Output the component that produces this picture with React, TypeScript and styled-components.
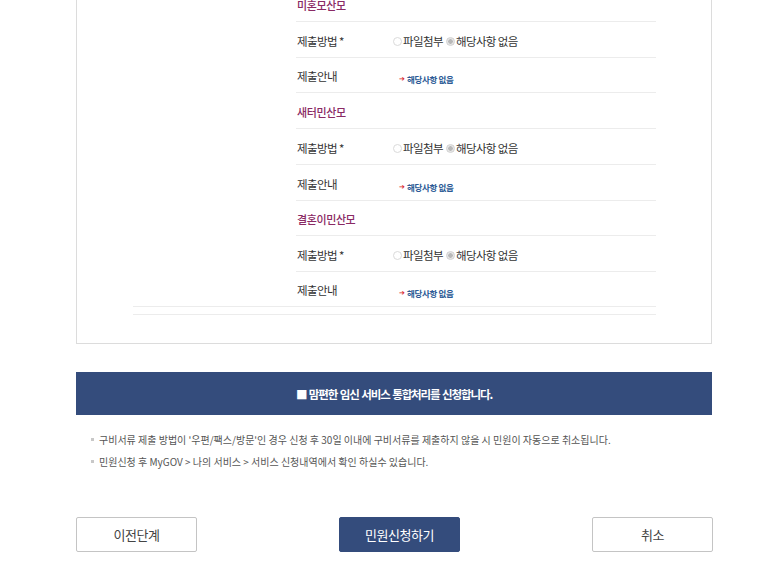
import React from "react";
import styled, { createGlobalStyle } from "styled-components";

const Global = createGlobalStyle`
  html, body { margin: 0; padding: 0; background: #fff; }
  body { font-family: "Noto Sans CJK KR", "Noto Sans", sans-serif; color: #333; overflow: hidden; }
`;

const Page = styled.div`
  width: 773px;
  height: 579px;
  overflow: hidden;
  display: flex;
  flex-direction: column;
  align-items: flex-start;
  padding-left: 76px;
  box-sizing: border-box;
`;

const Box = styled.div`
  margin-top: -40px;
  width: 636px;
  box-sizing: border-box;
  border: 1px solid #dcdcdc;
  padding: 25px 55px 28px 56px;
`;

const Table = styled.div`
  display: grid;
  grid-template-columns: 163px 360px;
  border-bottom: 1px solid #ececec;
`;

const SideCell = styled.div``;

const RightCol = styled.div`
  display: flex;
  flex-direction: column;
`;

const Row = styled.div<{ $h: number; $last?: boolean }>`
  height: ${(p) => p.$h}px;
  box-sizing: border-box;
  border-bottom: ${(p) => (p.$last ? "none" : "1px solid #ececec")};
  display: flex;
  align-items: center;
  padding-left: 1px;
  padding-top: 2px;
`;

const SectionTitle = styled.span`
  font-size: 11px;
  letter-spacing: -0.4px;
  color: #8a2a64;
  font-weight: 500;
`;

const Label = styled.span`
  width: 96px;
  flex: none;
  font-size: 11.5px;
  letter-spacing: -0.6px;
  color: #333;
`;

const Radios = styled.div`
  display: flex;
  align-items: center;
  font-size: 11.5px;
  letter-spacing: -0.6px;
  color: #333;
`;

const RadioDot = styled.span<{ $checked?: boolean }>`
  width: 9px;
  height: 9px;
  border-radius: 50%;
  box-sizing: border-box;
  border: 1px solid ${(p) => (p.$checked ? "#d2d2d2" : "#dadada")};
  background: ${(p) => (p.$checked ? "radial-gradient(circle, #b9b9b9 0 2px, #e6e6e6 2.5px)" : "#fff")};
  margin: 1px 1px 0 ${(p) => (p.$checked ? "3px" : "0")};
  flex: none;
`;

const Guide = styled.div`
  display: flex;
  align-items: center;
  padding-left: 6px;
  padding-top: 6px;
  gap: 2px;
`;

const GuideArrow = styled.span`
  color: #d8262a;
  font-size: 7px;
  font-family: "DejaVu Sans", sans-serif;
`;

const GuideText = styled.span`
  font-size: 8.5px;
  font-weight: 700;
  color: #2b5a95;
  letter-spacing: -0.3px;
`;

const Tail = styled.div`
  height: 7px;
  border-bottom: 1px solid #ececec;
`;

const Banner = styled.div`
  margin-top: 28px;
  width: 636px;
  height: 43px;
  background: #344c7c;
  color: #fff;
  display: flex;
  align-items: center;
  justify-content: center;
  font-size: 11.5px;
  font-weight: 700;
  letter-spacing: -1.1px;
  word-spacing: 1px;
  box-sizing: border-box;
`;

const Notes = styled.ul`
  list-style: none;
  margin: 13px 0 0 0;
  padding: 0 0 0 15px;
`;

const Note = styled.li`
  height: 22px;
  display: flex;
  align-items: center;
  font-size: 10px;
  letter-spacing: 0;
  color: #555;
  &::before {
    content: "";
    width: 3px;
    height: 3px;
    background: #c8c8c8;
    margin-right: 5px;
    flex: none;
  }
`;

const Buttons = styled.div`
  margin-top: 45px;
  width: 637px;
  display: flex;
  justify-content: space-between;
`;

const Btn = styled.button<{ $primary?: boolean; $shift?: number }>`
  width: 121px;
  height: 35px;
  box-sizing: border-box;
  border-radius: 2px;
  border: 1px solid ${(p) => (p.$primary ? "#344c7c" : "#c4c4c4")};
  background: ${(p) => (p.$primary ? "#344c7c" : "#fff")};
  color: ${(p) => (p.$primary ? "#fff" : "#444")};
  font-family: "Noto Sans CJK KR", sans-serif;
  font-size: 13px;
  letter-spacing: -0.5px;
  margin-left: ${(p) => p.$shift ?? 0}px;
  padding: 0;
  cursor: pointer;
`;

const sections = ["미혼모산모", "새터민산모", "결혼이민산모"];
const heights = [
  [36, 36, 35],
  [36, 36, 36],
  [35, 36, 34],
];

export default function App() {
  return (
    <>
      <Global />
      <Page>
        <Box>
          <Table>
            <SideCell />
            <RightCol>
              {sections.map((s, i) => (
                <React.Fragment key={s}>
                  <Row $h={heights[i][0]}>
                    <SectionTitle>{s}</SectionTitle>
                  </Row>
                  <Row $h={heights[i][1]}>
                    <Label>제출방법 *</Label>
                    <Radios>
                      <RadioDot />
                      파일첨부
                      <RadioDot $checked />
                      해당사항 없음
                    </Radios>
                  </Row>
                  <Row $h={heights[i][2]} $last={i === sections.length - 1}>
                    <Label>제출안내</Label>
                    <Guide>
                      <GuideArrow>➔</GuideArrow>
                      <GuideText>해당사항 없음</GuideText>
                    </Guide>
                  </Row>
                </React.Fragment>
              ))}
            </RightCol>
          </Table>
          <Tail />
        </Box>
        <Banner>■ 맘편한 임신 서비스 통합처리를 신청합니다.</Banner>
        <Notes>
          <Note>구비서류 제출 방법이 '우편/팩스/방문'인 경우 신청 후 30일 이내에 구비서류를 제출하지 않을 시 민원이 자동으로 취소됩니다.</Note>
          <Note>민원신청 후 MyGOV &gt; 나의 서비스 &gt; 서비스 신청내역에서 확인 하실수 있습니다.</Note>
        </Notes>
        <Buttons>
          <Btn>이전단계</Btn>
          <Btn $primary $shift={10}>민원신청하기</Btn>
          <Btn>취소</Btn>
        </Buttons>
      </Page>
    </>
  );
}
